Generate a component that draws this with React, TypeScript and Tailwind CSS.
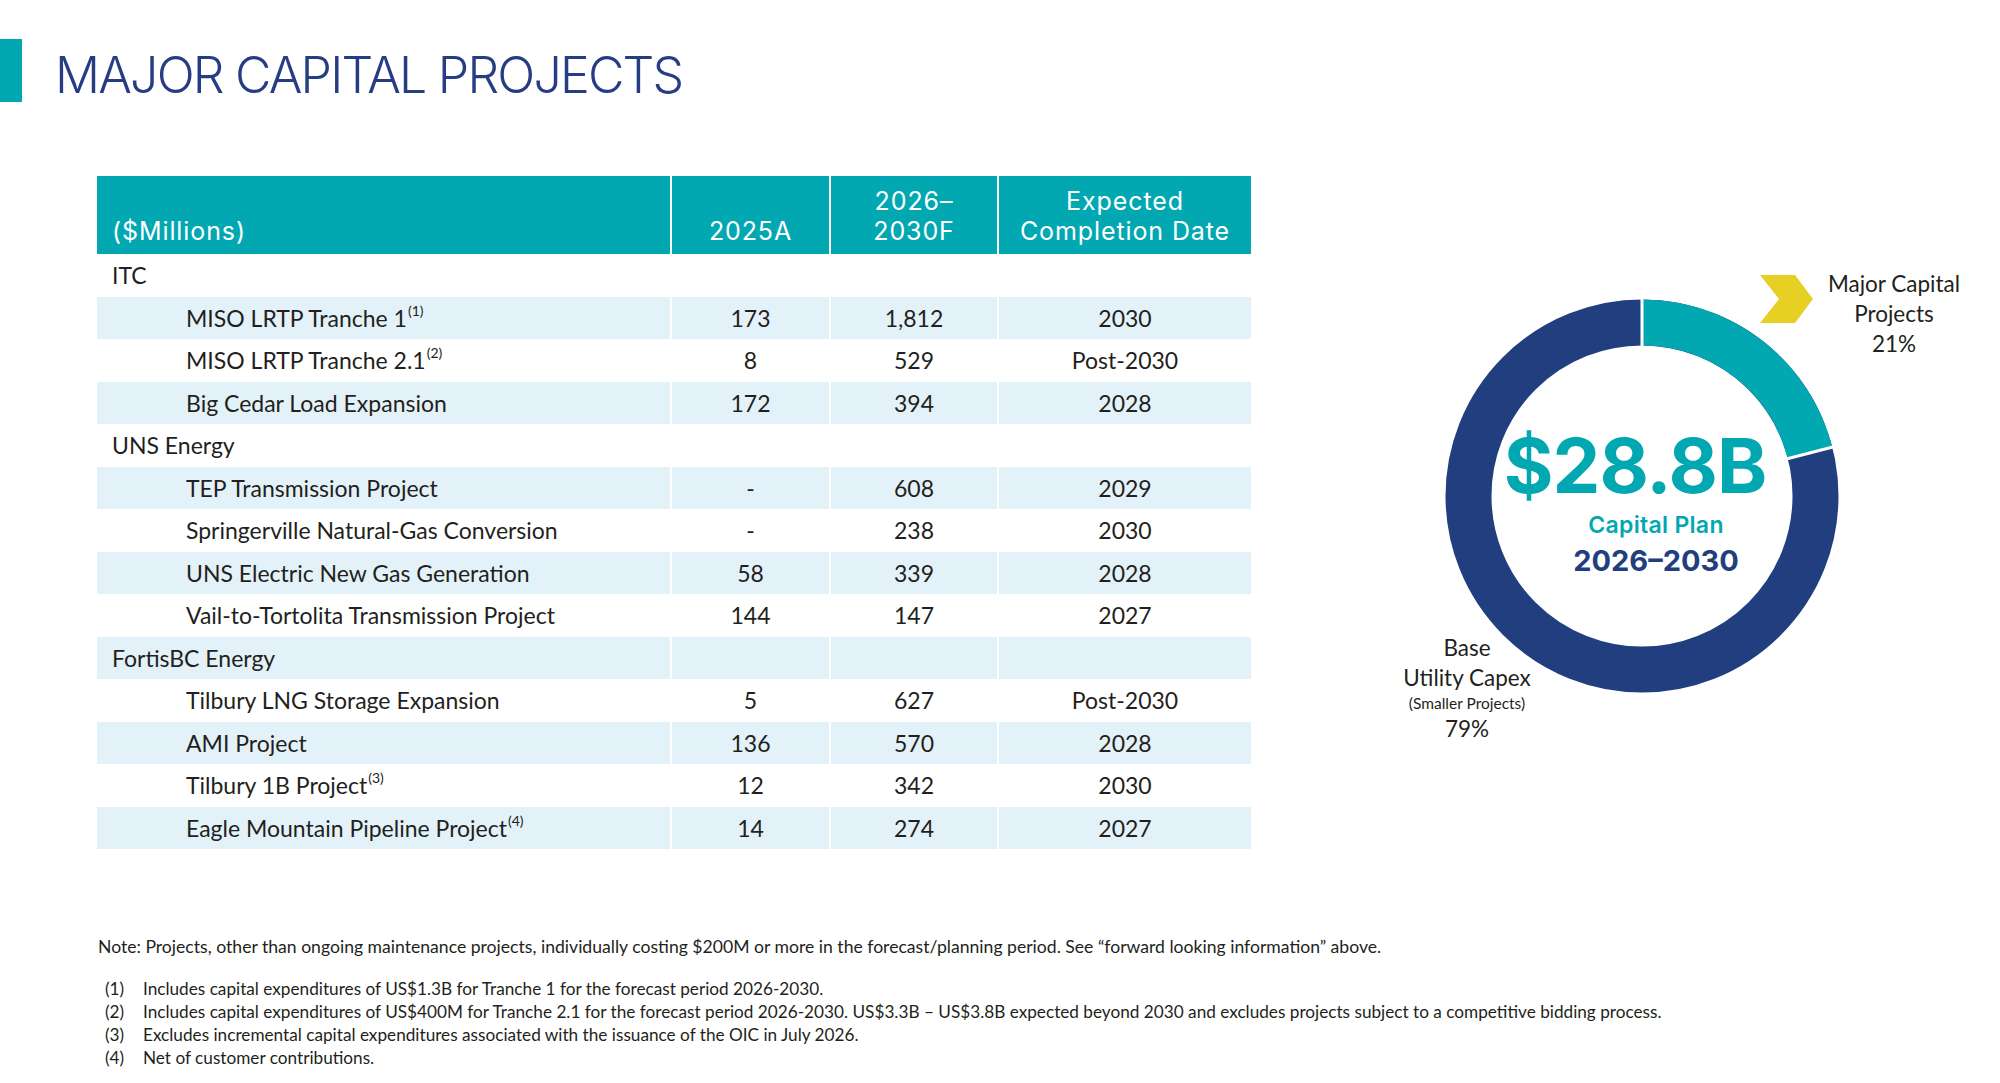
import React from 'react'

type Row = {
    label: string
    group?: boolean
    sup?: string
    a?: string
    f?: string
    d?: string
    shade: boolean
}

const rows: Row[] = [
    { label: 'ITC', group: true, shade: false },
    { label: 'MISO LRTP Tranche 1', sup: '(1)', a: '173', f: '1,812', d: '2030', shade: true },
    { label: 'MISO LRTP Tranche 2.1', sup: '(2)', a: '8', f: '529', d: 'Post-2030', shade: false },
    { label: 'Big Cedar Load Expansion', a: '172', f: '394', d: '2028', shade: true },
    { label: 'UNS Energy', group: true, shade: false },
    { label: 'TEP Transmission Project', a: '-', f: '608', d: '2029', shade: true },
    { label: 'Springerville Natural-Gas Conversion', a: '-', f: '238', d: '2030', shade: false },
    { label: 'UNS Electric New Gas Generation', a: '58', f: '339', d: '2028', shade: true },
    { label: 'Vail-to-Tortolita Transmission Project', a: '144', f: '147', d: '2027', shade: false },
    { label: 'FortisBC Energy', group: true, shade: true },
    { label: 'Tilbury LNG Storage Expansion', a: '5', f: '627', d: 'Post-2030', shade: false },
    { label: 'AMI Project', a: '136', f: '570', d: '2028', shade: true },
    { label: 'Tilbury 1B Project', sup: '(3)', a: '12', f: '342', d: '2030', shade: false },
    { label: 'Eagle Mountain Pipeline Project', sup: '(4)', a: '14', f: '274', d: '2027', shade: true },
]

const footnotes = [
    'Includes capital expenditures of US$1.3B for Tranche 1 for the forecast period 2026-2030.',
    'Includes capital expenditures of US$400M for Tranche 2.1 for the forecast period 2026-2030. US$3.3B – US$3.8B expected beyond 2030 and excludes projects subject to a competitive bidding process.',
    'Excludes incremental capital expenditures associated with the issuance of the OIC in July 2026.',
    'Net of customer contributions.',
]

function Donut() {
    // center 200,200 ; outer 196.5 ; inner 150.5
    const r = 173.5
    const c = 2 * Math.PI * r
    const share = 0.21
    const angle = (share * 360 - 90) * (Math.PI / 180)
    return (
        <svg width="400" height="400" viewBox="0 0 400 400">
            <circle cx="200" cy="200" r={r} fill="none" stroke="#213f7f" strokeWidth="46" />
            <circle
                cx="200"
                cy="200"
                r={r}
                fill="none"
                stroke="#02a8b1"
                strokeWidth="46"
                strokeDasharray={`${c * share} ${c}`}
                transform="rotate(-90 200 200)"
            />
            <line x1="200" y1="0" x2="200" y2="52" stroke="#fff" strokeWidth="3" />
            <line
                x1={200 + 148 * Math.cos(angle)}
                y1={200 + 148 * Math.sin(angle)}
                x2={200 + 200 * Math.cos(angle)}
                y2={200 + 200 * Math.sin(angle)}
                stroke="#fff"
                strokeWidth="3"
            />
        </svg>
    )
}

export default function App() {
    return (
        <div className="relative h-[1083px] w-[2000px] overflow-hidden bg-white font-['Lato',sans-serif] text-[#231f20]">
            {/* title */}
            <div className="flex items-start pt-[39px]">
                <div className="h-[63px] w-[22px] bg-[#02a8b1]" />
                <h1 className="ml-[33px] mt-[11px] font-['Inter',sans-serif] text-[50px] leading-[50px] font-light tracking-[-1.8px] text-[#263d84]">
                    MAJOR CAPITAL PROJECTS
                </h1>
            </div>

            <div className="mt-[74px] flex items-start">
                {/* table */}
                <div className="ml-[97px] w-[1154px]">
                    <div className="flex h-[78px] bg-[#02a8b1] font-['Inter',sans-serif] text-[25px] leading-[30px] tracking-[0.9px] text-white">
                        <div className="flex w-[573px] items-end pb-[8px] pl-[15px]">($Millions)</div>
                        <div className="flex w-[159px] items-end justify-center border-l-2 border-white pb-[8px] text-center">
                            2025A
                        </div>
                        <div className="flex w-[168px] items-end justify-center border-l-2 border-white pb-[8px] text-center">
                            2026–
                            <br />
                            2030F
                        </div>
                        <div className="flex w-[254px] items-end justify-center border-l-2 border-white pb-[8px] text-center">
                            Expected
                            <br />
                            Completion Date
                        </div>
                    </div>
                    {rows.map((row) => {
                        const bg = row.shade ? 'bg-[#e3f2f8]' : 'bg-white'
                        return (
                            <div key={row.label} className="flex h-[42.5px] text-[23px]">
                                <div className={`flex w-[573px] items-center ${bg} ${row.group ? 'pl-[15px]' : 'pl-[89px]'}`}>
                                    {row.label}
                                    {row.sup && <sup className="ml-[1px] text-[14px]">{row.sup}</sup>}
                                </div>
                                <div className={`flex w-[159px] items-center justify-center border-l-2 border-white ${bg}`}>
                                    {row.a}
                                </div>
                                <div className={`flex w-[168px] items-center justify-center border-l-2 border-white ${bg}`}>
                                    {row.f}
                                </div>
                                <div className={`flex w-[254px] items-center justify-center border-l-2 border-white ${bg}`}>
                                    {row.d}
                                </div>
                            </div>
                        )
                    })}
                </div>

                {/* chart */}
                <div className="relative h-[600px] w-[749px]">
                    <div className="absolute left-[190.5px] top-[119.5px]">
                        <Donut />
                    </div>
                    <div className="absolute left-[205px] top-[249px] flex w-[400px] flex-col items-center font-['Inter',sans-serif]">
                        <div className="pr-[42px] text-[76px] leading-[80px] font-bold tracking-[-1px] text-[#02a8b1]">
                            $28.8B
                        </div>
                        <div className="mt-[6px] text-[23px] leading-[28px] font-semibold tracking-[0.3px] text-[#02a8b1]">
                            Capital Plan
                        </div>
                        <div className="mt-[4px] text-[29px] leading-[36px] font-bold text-[#213f7f]">2026–2030</div>
                    </div>
                    <svg className="absolute left-[509px] top-[99px]" width="53" height="48" viewBox="0 0 53 48">
                        <polygon points="0,0 35,0 53,24 35,48 0,48 19,24" fill="#e6d024" />
                    </svg>
                    <div className="absolute left-[543px] top-[93px] w-[200px] text-center text-[22.5px] leading-[30px]">
                        <div>Major Capital</div>
                        <div>Projects</div>
                        <div>21%</div>
                    </div>
                    <div className="absolute left-[116px] top-[457px] w-[200px] text-center">
                        <div className="text-[22.5px] leading-[30px]">Base</div>
                        <div className="text-[22.5px] leading-[30px]">Utility Capex</div>
                        <div className="text-[15.5px] leading-[21px]">(Smaller Projects)</div>
                        <div className="text-[22.5px] leading-[29px]">79%</div>
                    </div>
                </div>
            </div>

            {/* notes */}
            <div className="mt-[86px] pl-[98px] leading-[23px]">
                <p className="text-[17.6px]">
                    Note: Projects, other than ongoing maintenance projects, individually costing $200M or more in the
                    forecast/planning period. See “forward looking information” above.
                </p>
                <div className="mt-[19px] text-[17.2px]">
                    {footnotes.map((text, i) => (
                        <div key={i} className="flex">
                            <span className="ml-[7px] w-[38px]">({i + 1})</span>
                            <span>{text}</span>
                        </div>
                    ))}
                </div>
            </div>
        </div>
    )
}
